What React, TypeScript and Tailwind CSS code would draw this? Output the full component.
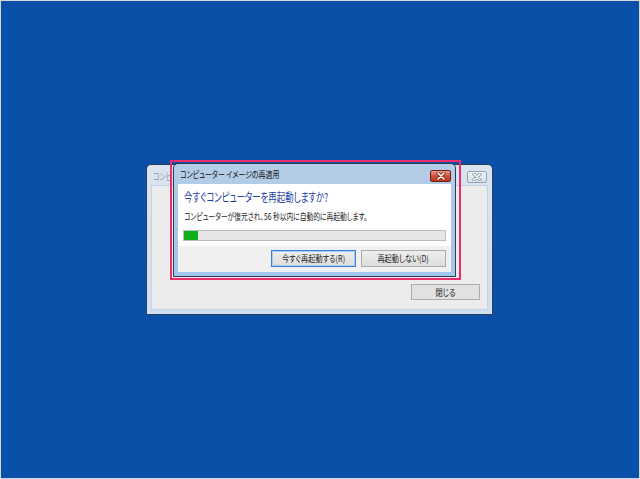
import React from "react";

const jp = "font-['Meiryo_UI','Noto_Sans_CJK_JP',sans-serif] [font-feature-settings:'palt'] antialiased";

function CloseGlyph({ color, outline }: { color: string; outline: string }) {
  return (
    <svg width="10" height="8" viewBox="0 0 10 8">
      <path d="M2 1 L8 7 M8 1 L2 7" stroke={outline} strokeWidth="3.2" strokeLinecap="round" />
      <path d="M2 1 L8 7 M8 1 L2 7" stroke={color} strokeWidth="1.6" strokeLinecap="round" />
    </svg>
  );
}

function WinButton({ label, primary }: { label: string; primary?: boolean }) {
  return (
    <div
      className={
        "h-[17px] w-[85px] flex items-center justify-center text-[9px] leading-none text-[#222] bg-gradient-to-b from-[#eeeeee] to-[#dddddd] " +
        (primary
          ? "border border-[#3c7fd8] shadow-[inset_0_0_0_1px_#a8cdf2]"
          : "border border-[#acacac]")
      }
    >
      <span className="block w-max whitespace-nowrap scale-x-[0.8] origin-center">{label}</span>
    </div>
  );
}

export default function App() {
  return (
    <div
      className={
        "relative w-[640px] h-[479px] overflow-hidden bg-[#0b50a8] shadow-[inset_0_0_0_1px_#d6d6d6] " +
        jp
      }
    >
      {/* back window: restore dialog behind */}
      <div className="absolute left-[146px] top-[164px] w-[347px] h-[151px] border border-[#2c3e55] rounded-t-[5px] bg-gradient-to-b from-[#d9e4ef] to-[#cfe0f3] flex flex-col px-[4px] pb-[4px]">
        <div className="h-[20px] flex items-center justify-between pt-[3px] pr-[1px]">
          <span className="pl-[2px] w-[22px] overflow-hidden whitespace-nowrap text-[9px] text-[#8e9aa8]">
            <span className="block w-max scale-x-[0.77] origin-left">コンピ</span>
          </span>
          <div className="w-[20px] h-[12px] rounded-[2px] border border-[#94a4b6] bg-gradient-to-b from-[#eef2f6] to-[#d8e1ea] flex items-center justify-center">
            <CloseGlyph color="#ffffff" outline="#8896a6" />
          </div>
        </div>
        <div className="flex-1 bg-[#ececec] border border-[#c4d4e6] flex flex-col items-end justify-end pr-[7px] pb-[9px]">
          <div className="w-[69px] h-[16px] border border-[#adadad] bg-[#e1e1e1] flex items-center justify-center text-[9px] leading-none text-[#222]">
            <span className="block w-max scale-x-[0.8] origin-center">閉じる</span>
          </div>
        </div>
      </div>

      {/* front dialog */}
      <div className="absolute left-[173px] top-[163px] w-[283px] h-[114px] border border-[#2b3d52] rounded-t-[5px] bg-gradient-to-b from-[#b6cde6] via-[#aac7e6] to-[#a3c6ec] flex flex-col px-[4px] pb-[4px]">
        <div className="h-[20px] flex items-center justify-between pl-[2px]">
          <span className="text-[9px] text-[#111] leading-none pt-[1px]">
            <span className="block w-max whitespace-nowrap scale-x-[0.77] origin-left">
              コンピューター イメージの再適用
            </span>
          </span>
          <div className="w-[21px] h-[12px] mt-[3px] rounded-[2px] border border-[#6e2014] bg-gradient-to-b from-[#e9a08f] via-[#d24e37] to-[#c23a22] flex items-center justify-center">
            <CloseGlyph color="#ffffff" outline="#7a2a1c" />
          </div>
        </div>
        <div className="h-[62px] bg-white flex flex-col px-[5px] pt-[5px]">
          <div className="h-[16px] pl-[1px] flex items-center text-[12px] leading-none text-[#2240a4]">
            <span className="block w-max whitespace-nowrap scale-x-[0.7] origin-left">
              今すぐコンピューターを再起動しますか?
            </span>
          </div>
          <div className="h-[12px] mt-[5px] pl-[1px] flex items-center text-[9px] leading-none text-[#1a1a1a]">
            <span className="block w-max whitespace-nowrap scale-x-[0.75] origin-left">
              コンピューターが復元され、56 秒以内に自動的に再起動します。
            </span>
          </div>
          <div className="h-[11px] mt-[8px] border border-[#bcbcbc] bg-[#e6e6e6] flex">
            <div className="w-[14px] h-full bg-[#0fae1c]" />
          </div>
        </div>
        <div className="flex-1 bg-[#f0f0f0] flex items-center justify-end gap-[5px] pr-[5px] pb-[1px]">
          <WinButton label="今すぐ再起動する(R)" primary />
          <WinButton label="再起動しない(D)" />
        </div>
      </div>

      {/* highlight frame */}
      <div className="absolute left-[170px] top-[160px] w-[291px] h-[120px] border-2 border-[#ea2e6c]" />
    </div>
  );
}
